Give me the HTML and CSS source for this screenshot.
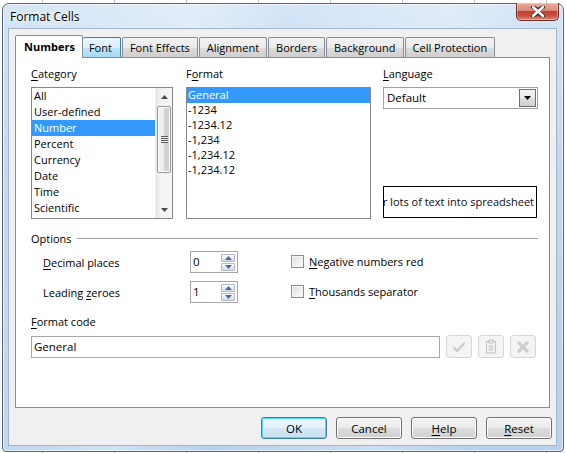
FILE: index.html
```html
<!DOCTYPE html>
<html>
<head>
<meta charset="utf-8">
<link rel="stylesheet" href="styles.css">
</head>
<body>
<div class="window">
  <div class="titlebar">
    <span class="title">Format Cells</span>
    <div class="close">
      <svg width="16" height="11" viewBox="0 0 16 11">
        <path d="M3 1 L8 4.2 L13 1 M3 10 L8 6.8 L13 10" fill="none" stroke="#3a2a2a" stroke-width="4" stroke-linecap="round" stroke-linejoin="round"/>
        <path d="M3.2 1.2 L12.8 9.8 M12.8 1.2 L3.2 9.8" fill="none" stroke="#fff" stroke-width="2.6" stroke-linecap="round"/>
      </svg>
    </div>
  </div>
  <div class="client">
    <div class="tabs">
      <div class="tab selected">Numbers</div>
      <div class="tab hover">Font</div>
      <div class="tab">Font Effects</div>
      <div class="tab">Alignment</div>
      <div class="tab">Borders</div>
      <div class="tab">Background</div>
      <div class="tab">Cell Protection</div>
    </div>
    <div class="panel">
      <div class="top-row">
        <div class="col col-cat">
          <div class="label"><u>C</u>ategory</div>
          <div class="listbox cat-list">
            <div class="items">
              <div class="item">All</div>
              <div class="item">User-defined</div>
              <div class="item sel">Number</div>
              <div class="item">Percent</div>
              <div class="item">Currency</div>
              <div class="item">Date</div>
              <div class="item">Time</div>
              <div class="item">Scientific</div>
            </div>
            <div class="scrollbar">
              <div class="sb-arrow"><svg width="7" height="4" viewBox="0 0 7 4"><path d="M0 4 L3.5 0 L7 4Z" fill="#4d4d4d"/></svg></div>
              <div class="sb-thumb">
                <div class="grip"></div>
              </div>
              <div class="sb-track"></div>
              <div class="sb-arrow"><svg width="7" height="4" viewBox="0 0 7 4"><path d="M0 0 L7 0 L3.5 4Z" fill="#4d4d4d"/></svg></div>
            </div>
          </div>
        </div>
        <div class="col col-fmt">
          <div class="label">F<u>o</u>rmat</div>
          <div class="listbox fmt-list">
            <div class="items">
              <div class="fitem sel">General</div>
              <div class="fitem">-1234</div>
              <div class="fitem">-1234.12</div>
              <div class="fitem">-1,234</div>
              <div class="fitem">-1,234.12</div>
              <div class="fitem">-1,234.12</div>
            </div>
          </div>
        </div>
        <div class="col col-lang">
          <div class="label"><u>L</u>anguage</div>
          <div class="combo">
            <span class="combo-text">Default</span>
            <span class="combo-btn"><svg width="7" height="4" viewBox="0 0 7 4"><path d="M0 0 L7 0 L3.5 4Z" fill="#000"/></svg></span>
          </div>
          <div class="spacer"></div>
          <div class="preview"><span class="preview-text">r lots of text into spreadsheet</span></div>
        </div>
      </div>

      <div class="options-head">
        <span>Options</span>
        <div class="rule"></div>
      </div>

      <div class="options">
        <div class="opt-row">
          <div class="opt-label"><u>D</u>ecimal places</div>
          <div class="spin">
            <span class="spin-val">0</span>
            <div class="spin-btns">
              <div class="spin-btn"><svg width="7" height="4" viewBox="0 0 7 4"><path d="M0 4 L3.5 0 L7 4Z" fill="#4e6a91"/></svg></div>
              <div class="spin-btn"><svg width="7" height="4" viewBox="0 0 7 4"><path d="M0 0 L7 0 L3.5 4Z" fill="#4e6a91"/></svg></div>
            </div>
          </div>
          <div class="check"><span class="box"></span><span><u>N</u>egative numbers red</span></div>
        </div>
        <div class="opt-row">
          <div class="opt-label">Leading <u>z</u>eroes</div>
          <div class="spin">
            <span class="spin-val">1</span>
            <div class="spin-btns">
              <div class="spin-btn"><svg width="7" height="4" viewBox="0 0 7 4"><path d="M0 4 L3.5 0 L7 4Z" fill="#4e6a91"/></svg></div>
              <div class="spin-btn"><svg width="7" height="4" viewBox="0 0 7 4"><path d="M0 0 L7 0 L3.5 4Z" fill="#4e6a91"/></svg></div>
            </div>
          </div>
          <div class="check"><span class="box"></span><span><u>T</u>housands separator</span></div>
        </div>
      </div>

      <div class="label code-label"><u>F</u>ormat code</div>
      <div class="code-row">
        <div class="code-input">General</div>
        <div class="tool-btn">
          <svg width="14" height="12" viewBox="0 0 14 12"><path d="M1.5 6.5 L5 10 L12.5 2" fill="none" stroke="#c8c8c8" stroke-width="2"/></svg>
        </div>
        <div class="tool-btn">
          <svg width="12" height="15" viewBox="0 0 12 15"><rect x="1.5" y="2.5" width="9" height="11.5" fill="#f4f4f4" stroke="#c2c2c2"/><rect x="4" y="1" width="4" height="3" fill="#e8e8e8" stroke="#c2c2c2"/><path d="M3.5 7 H8.5 M3.5 9 H8.5 M3.5 11 H8.5" stroke="#c2c2c2"/></svg>
        </div>
        <div class="tool-btn">
          <svg width="12" height="12" viewBox="0 0 12 12"><path d="M2 2 L10 10 M10 2 L2 10" stroke="#bdbdbd" stroke-width="3" stroke-linecap="round"/><path d="M2 2 L10 10 M10 2 L2 10" stroke="#dadada" stroke-width="1.2" stroke-linecap="round"/></svg>
        </div>
      </div>
    </div>
    <div class="buttons">
      <div class="btn default">OK</div>
      <div class="btn">Cancel</div>
      <div class="btn"><u>H</u>elp</div>
      <div class="btn"><u>R</u>eset</div>
    </div>
  </div>
</div>
</body>
</html>
```

FILE: styles.css
```css
* { box-sizing: border-box; }

html, body {
  margin: 0;
  padding: 0;
}

body {
  width: 566px;
  height: 453px;
  overflow: hidden;
  font-family: "Open Sans", "Noto Sans", sans-serif;
  font-size: 11px;
  color: #000;
  background-color: #fff;
  background-image:
    repeating-linear-gradient(to right, transparent 0, transparent 42px, #c6c6c6 42px, #c6c6c6 43px, transparent 43px, transparent 72px);
}

u { text-decoration: underline; text-underline-offset: 2px; }

.window {
  margin: 3px 0 0 2px;
  width: 562px;
  height: 449px;
  border: 1px solid #55657a;
  border-radius: 7px 7px 4px 4px;
  background:
    linear-gradient(100deg, rgba(255,255,255,0) 0%, rgba(255,255,255,0.35) 30%, rgba(255,255,255,0) 45%, rgba(255,255,255,0.3) 70%, rgba(255,255,255,0) 85%),
    linear-gradient(to bottom, #d3e5f6 0%, #bfd7ee 40%, #b7d1eb 100%);
  box-shadow: inset 0 0 0 1px rgba(255,255,255,0.6);
  display: flex;
  flex-direction: column;
}

.titlebar {
  height: 24px;
  position: relative;
  display: flex;
  align-items: center;
  padding-left: 7px;
}

.title {
  font-size: 12px;
  color: #000;
  text-shadow: 0 0 6px #fff, 0 0 3px #fff;
  margin-top: 1px;
}

.close {
  position: absolute;
  top: -1px;
  right: 4px;
  width: 43px;
  height: 18px;
  border: 1px solid #6b2f27;
  border-top: none;
  border-radius: 0 0 5px 5px;
  background: linear-gradient(to bottom, #e9a99b 0%, #d88a7a 45%, #c4402f 50%, #c8503e 75%, #df8a72 100%);
  box-shadow: inset 0 0 0 1px rgba(255,255,255,0.35);
  display: flex;
  align-items: center;
  justify-content: center;
}

.client {
  margin-left: 5px;
  width: 549px;
  height: 418px;
  background: #f0f0f0;
  border: 1px solid #a4b4c6;
  padding: 6px 6px 0 6px;
  display: flex;
  flex-direction: column;
}

/* Tabs */
.tabs {
  display: flex;
  align-items: flex-end;
  height: 22px;
  position: relative;
  z-index: 2;
}

.tab {
  height: 20px;
  padding: 0 7px;
  margin-right: 1px;
  border: 1px solid #898c95;
  border-bottom: none;
  border-radius: 2px 2px 0 0;
  background: linear-gradient(to bottom, #f2f2f2 0%, #ebebeb 50%, #dddddd 51%, #cfcfcf 100%);
  display: flex;
  align-items: center;
  white-space: nowrap;
  line-height: 1;
}

.tab.selected {
  height: 23px;
  margin-bottom: -1px;
  background: #fff;
  font-weight: bold;
  padding: 0 7px 2px 8px;
  margin-right: 0;
}

.tab.hover {
  background: linear-gradient(to bottom, #eaf6fd 0%, #d9f0fc 50%, #bee6fd 51%, #a7d9f5 100%);
  border-color: #3c7fb1;
  border-left: none;
  padding: 0 8px 0 6px;
}

/* Panel */
.panel {
  height: 351px;
  background: #fff;
  border: 1px solid #898c95;
  padding: 8px 11px 0 15px;
  display: flex;
  flex-direction: column;
}

.top-row {
  display: flex;
  gap: 13px;
}

.col { display: flex; flex-direction: column; }
.col-cat { width: 142px; }
.col-fmt { width: 185px; }
.col-lang { width: 155px; margin-left: -1px; }

.label {
  height: 16px;
  line-height: 16px;
  white-space: nowrap;
}

.listbox {
  margin-top: 5px;
  height: 132px;
  border: 1px solid #828790;
  background: #fff;
  display: flex;
  overflow: hidden;
}

.items { flex: 1; }

.item {
  height: 16px;
  line-height: 15px;
  padding-left: 2px;
  white-space: nowrap;
}

.fitem {
  height: 15px;
  line-height: 14px;
  padding-left: 1px;
  white-space: nowrap;
}

.sel { background: #3399ff; color: #fff; }

.scrollbar {
  width: 17px;
  display: flex;
  flex-direction: column;
  background: linear-gradient(to right, #e4e4e4 0%, #f4f4f4 30%, #f4f4f4 100%);
  border-left: 1px solid #efefef;
}

.sb-arrow {
  height: 17px;
  display: flex;
  align-items: center;
  justify-content: center;
}

.sb-thumb {
  margin: 1px 1px 0 1px;
  height: 67px;
  border: 1px solid #969696;
  border-radius: 2px;
  background: linear-gradient(to right, #f2f2f2 0%, #ebebeb 50%, #d6d6d6 51%, #cbcbcb 100%);
  box-shadow: inset 0 0 0 1px #fbfbfb;
  display: flex;
  align-items: center;
  justify-content: center;
}

.grip {
  width: 7px;
  height: 7px;
  background: repeating-linear-gradient(to bottom, #5a5a5a 0, #5a5a5a 1px, #f0f0f0 1px, #f0f0f0 2px);
}

.sb-track { flex: 1; }

.combo {
  margin-top: 5px;
  height: 22px;
  border: 1px solid #a0a0a0;
  background: #fff;
  display: flex;
  align-items: center;
  padding: 0 1px 0 3px;
}

.combo-text { flex: 1; font-size: 11.5px; margin-top: -1px; }

.combo-btn {
  width: 17px;
  height: 18px;
  border: 1px solid #707070;
  background: linear-gradient(to bottom, #f2f2f2 0%, #ebebeb 50%, #dddddd 51%, #cfcfcf 100%);
  display: flex;
  align-items: center;
  justify-content: center;
}

.spacer { height: 77px; }

.preview {
  height: 32px;
  width: 154px;
  border: 1px solid #000;
  display: flex;
  justify-content: flex-end;
  align-items: center;
  padding-right: 2px;
  padding-bottom: 1px;
}

.preview-text {
  white-space: nowrap;
  font-size: 11px;
  color: #0c0c20;
}

.options-head {
  margin-top: 11px;
  height: 16px;
  display: flex;
  align-items: center;
  gap: 5px;
  width: 507px;
}

.rule {
  flex: 1;
  height: 1px;
  background: #a0a0a0;
}

.options {
  margin-top: 5px;
  display: flex;
  flex-direction: column;
  gap: 8px;
}

.opt-row {
  display: flex;
  align-items: center;
  height: 22px;
}

.opt-label {
  width: 159px;
  padding-left: 12px;
  white-space: nowrap;
}

.spin {
  width: 48px;
  height: 22px;
  border: 1px solid #a8a8a8;
  background: #fff;
  display: flex;
  align-items: center;
  padding: 0 2px 0 2px;
}

.spin-val { flex: 1; font-size: 11.5px; margin-top: -2px; }

.spin-btns {
  display: flex;
  flex-direction: column;
  gap: 1px;
}

.spin-btn {
  width: 14px;
  height: 8px;
  border: 1px solid #b3bac4;
  border-radius: 1px;
  background: linear-gradient(to bottom, #fbfcfd 0%, #e6ebf1 50%, #d5dde6 100%);
  display: flex;
  align-items: center;
  justify-content: center;
}

.check {
  margin-left: 53px;
  display: flex;
  align-items: center;
  gap: 5px;
  white-space: nowrap;
  margin-top: -2px;
}

.box {
  width: 13px;
  height: 13px;
  border: 1px solid #8f8f8f;
  background: linear-gradient(135deg, #dcdcdc 0%, #f4f4f4 70%, #ffffff 100%);
  box-shadow: inset 0 0 0 1px #f4f4f4;
}

.code-label { margin-top: 11px; }

.code-row {
  margin-top: 5px;
  display: flex;
  align-items: center;
  gap: 6px;
  width: 507px;
}

.code-input {
  width: 409px;
  height: 22px;
  border: 1px solid #a8a8a8;
  background: #fff;
  line-height: 19px;
  padding-left: 2px;
  font-size: 11.5px;
}

.tool-btn {
  width: 26px;
  height: 23px;
  border: 1px solid #d6d6d6;
  border-radius: 3px;
  background: #f4f4f4;
  display: flex;
  align-items: center;
  justify-content: center;
}

.buttons {
  margin-top: 9px;
  display: flex;
  justify-content: flex-end;
  gap: 9px;
  margin-right: -2px;
}

.btn {
  width: 66px;
  height: 22px;
  border: 1px solid #707070;
  border-radius: 3px;
  background: linear-gradient(to bottom, #f2f2f2 0%, #ebebeb 50%, #dddddd 51%, #cfcfcf 100%);
  box-shadow: inset 0 0 0 1px #fcfcfc;
  display: flex;
  align-items: center;
  justify-content: center;
  font-size: 11.5px;
}

.btn.default {
  border-color: #3c7fb1;
  box-shadow: inset 0 0 0 1px #48d8fb;
  background: linear-gradient(to bottom, #eaf6fd 0%, #e4f2fa 50%, #d4e8f5 51%, #c8e0f0 100%);
}
```
